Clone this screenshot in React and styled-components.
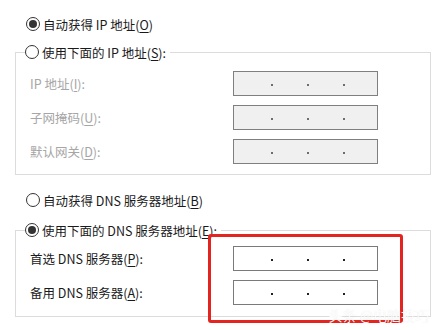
import React from 'react'
import styled, { createGlobalStyle } from 'styled-components'

const GlobalStyle = createGlobalStyle`
  body {
    margin: 0;
    background: #fff;
    font-family: "Noto Sans CJK SC", "Noto Sans", sans-serif;
  }
`;

function Radio({ checked }) {
    return <RadioCircle $checked={checked} />
}

function IpBox({ disabled }) {
    return (
        <Box $disabled={disabled}>
            <Dot $disabled={disabled} />
            <Dot $disabled={disabled} />
            <Dot $disabled={disabled} />
        </Box>
    )
}

function Field({ label, keyChar, disabled }) {
    return (
        <FieldRow>
            <Label $disabled={disabled}>
                {label}(<u>{keyChar}</u>):
            </Label>
            <IpBox disabled={disabled} />
        </FieldRow>
    )
}

export default function App() {
    return (
        <Page>
            <GlobalStyle />

            <OptionRow $top={14}>
                <Radio checked />
                <span>自动获得 IP 地址(<u>O</u>)</span>
            </OptionRow>

            <Group $top={8}>
                <Legend>
                    <OptionRow>
                        <Radio />
                        <span>使用下面的 IP 地址(<u>S</u>):</span>
                    </OptionRow>
                </Legend>
                <GroupBody $top={9} $bottom={10}>
                    <Field label="IP 地址" keyChar="I" disabled />
                    <Field label="子网掩码" keyChar="U" disabled />
                    <Field label="默认网关" keyChar="D" disabled />
                </GroupBody>
            </Group>

            <OptionRow $top={15}>
                <Radio />
                <span>自动获得 DNS 服务器地址(<u>B</u>)</span>
            </OptionRow>

            <Group $top={10}>
                <Legend>
                    <OptionRow>
                        <Radio checked />
                        <span>使用下面的 DNS 服务器地址(<u>E</u>):</span>
                    </OptionRow>
                </Legend>
                <GroupBody $top={6} $bottom={11}>
                    <Field label="首选 DNS 服务器" keyChar="P" />
                    <Field label="备用 DNS 服务器" keyChar="A" />
                </GroupBody>
            </Group>

            <Highlight />
            <Watermark>头条 @电脑技巧</Watermark>
        </Page>
    )
}

const Page = styled.div`
    position: relative;
    width: 435px;
    height: 330px;
    overflow: hidden;
    color: #1a1a1a;
    font-size: 12px;
`;

const OptionRow = styled.div`
    display: flex;
    align-items: center;
    gap: 3px;
    height: 20px;
    margin-top: ${p => p.$top || 0}px;
    padding-left: ${p => (p.$top !== undefined ? 26 : 0)}px;
    font-size: 12.5px;
    color: #1a1a1a;
    white-space: nowrap;

    u {
        text-decoration-thickness: 1px;
        text-underline-offset: 2px;
    }
`;

const RadioCircle = styled.span`
    display: grid;
    place-items: center;
    flex: none;
    width: 14px;
    height: 14px;
    box-sizing: border-box;
    border: 1px solid #333;
    border-radius: 50%;
    background: #fff;

    &::after {
        content: '';
        width: 8px;
        height: 8px;
        border-radius: 50%;
        background: #333;
        display: ${p => (p.$checked ? 'block' : 'none')};
    }
`;

const Group = styled.fieldset`
    margin: ${p => p.$top}px 0 0 15px;
    width: 416px;
    box-sizing: border-box;
    min-width: 0;
    padding: 0;
    border: 1px solid #dcdcdc;
`;

const Legend = styled.legend`
    margin-left: 9px;
    padding: 0 4px 0 0;
`;

const GroupBody = styled.div`
    display: flex;
    flex-direction: column;
    gap: 9px;
    padding: ${p => p.$top}px 0 ${p => p.$bottom}px 14px;
`;

const FieldRow = styled.div`
    display: grid;
    grid-template-columns: 203px 145px;
    align-items: center;
    height: 25px;
`;

const Label = styled.span`
    font-size: 12.5px;
    color: ${p => (p.$disabled ? '#a6a6a6' : '#1a1a1a')};
    white-space: nowrap;

    u {
        text-decoration-thickness: 1px;
        text-underline-offset: 2px;
    }
`;

const Box = styled.div`
    display: grid;
    grid-template-columns: repeat(3, 36px);
    align-items: center;
    height: 25px;
    box-sizing: border-box;
    padding: 2px 0 0 37px;
    border: 1px solid ${p => (p.$disabled ? '#7f7f7f' : '#7a7a7a')};
    background: ${p => (p.$disabled ? '#f0f0f0' : '#fff')};
`;

const Dot = styled.span`
    width: 2px;
    height: 2px;
    background: ${p => (p.$disabled ? '#6d6d6d' : '#222')};
`;

const Highlight = styled.div`
    position: absolute;
    left: 208px;
    top: 234px;
    width: 195px;
    height: 89px;
    box-sizing: border-box;
    border: 3px solid #e3241f;
    border-radius: 3px;
`;

const Watermark = styled.div`
    position: absolute;
    right: 6px;
    bottom: 5px;
    font-size: 14px;
    color: rgba(255, 255, 255, 0.95);
    text-shadow: 0 0 1px rgba(0, 0, 0, 0.1);
    white-space: nowrap;
`;
